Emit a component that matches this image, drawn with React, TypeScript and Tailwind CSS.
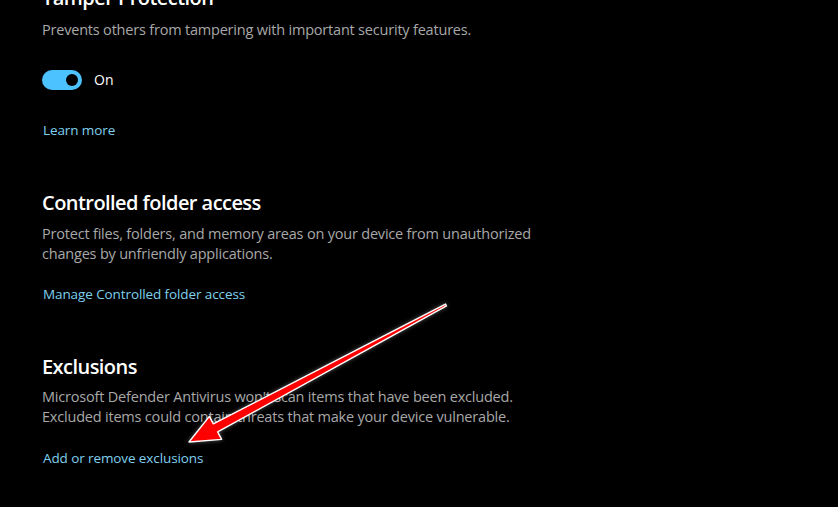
import React from "react";

const font = { fontFamily: '"Open Sans", "Noto Sans", sans-serif' };

function Title({ children, className = "" }: { children: React.ReactNode; className?: string }) {
  return (
    <div className={`text-[20px] leading-[28px] font-semibold text-white tracking-[-0.55px] ${className}`}>{children}</div>
  );
}

function Desc({ children, className = "" }: { children: React.ReactNode; className?: string }) {
  return <div className={`text-[14.5px] leading-[20px] text-[#a8a8a8] tracking-[-0.2px] ${className}`}>{children}</div>;
}

function Link({ children, className = "" }: { children: React.ReactNode; className?: string }) {
  return <div className={`ml-[1px] text-[13.5px] leading-[20px] text-[#7fd0ee] tracking-[-0.1px] ${className}`}>{children}</div>;
}

function Arrow() {
  const tip = [189, 442];
  const tail = [446, 305];
  const dx = tip[0] - tail[0];
  const dy = tip[1] - tail[1];
  const len = Math.hypot(dx, dy);
  const u = [dx / len, dy / len];
  const n = [-u[1], u[0]];
  const headLen = 30;
  const headW = 13;
  const shaftW = 4.6;
  const tailW = 1.1;
  const B = [tip[0] - u[0] * headLen, tip[1] - u[1] * headLen];
  const p = (base: number[], w: number) => `${base[0] + n[0] * w},${base[1] + n[1] * w}`;
  const pts = [
    `${tip[0]},${tip[1]}`,
    p(B, headW),
    p(B, shaftW),
    p(tail, tailW),
    p(tail, -tailW),
    p(B, -shaftW),
    p(B, -headW),
  ].join(" ");
  return (
    <svg className="absolute left-0 top-0 pointer-events-none" width="838" height="507" viewBox="0 0 838 507">
      <defs>
        <filter id="glow" x="-20%" y="-20%" width="140%" height="140%">
          <feGaussianBlur in="SourceAlpha" stdDeviation="2" result="b" />
          <feFlood floodColor="#ffffff" floodOpacity="0.35" />
          <feComposite in2="b" operator="in" result="g" />
          <feMerge>
            <feMergeNode in="g" />
            <feMergeNode in="SourceGraphic" />
          </feMerge>
        </filter>
      </defs>
      <polygon points={pts} fill="#ff0000" stroke="#ffffff" strokeWidth="1.4" strokeLinejoin="round" filter="url(#glow)" />
    </svg>
  );
}

export default function App() {
  return (
    <div className="relative w-[838px] h-[507px] bg-black overflow-hidden" style={font}>
      <div className="flex flex-col pl-[42px] -mt-[16px]">
        <Title>Tamper Protection</Title>
        <Desc className="mt-[8px]">Prevents others from tampering with important security features.</Desc>
        <div className="flex items-center gap-[12px] mt-[30px]">
          <div className="w-[40px] h-[20px] rounded-full bg-[#4cc2ff] flex items-center justify-end pr-[4px]">
            <div className="w-[12px] h-[12px] rounded-full bg-black" />
          </div>
          <span className="text-[14px] text-white leading-[20px]">On</span>
        </div>
        <Link className="mt-[30px]">Learn more</Link>

        <Title className="mt-[49px]">Controlled folder access</Title>
        <Desc className="mt-[7px]">
          Protect files, folders, and memory areas on your device from unauthorized
          <br />
          changes by unfriendly applications.
        </Desc>
        <Link className="mt-[20px]">Manage Controlled folder access</Link>

        <Title className="mt-[49px]">Exclusions</Title>
        <Desc className="mt-[6px]">
          Microsoft Defender Antivirus won't scan items that have been excluded.
          <br />
          Excluded items could contain threats that make your device vulnerable.
        </Desc>
        <Link className="mt-[21px]">Add or remove exclusions</Link>
      </div>
      <Arrow />
    </div>
  );
}
